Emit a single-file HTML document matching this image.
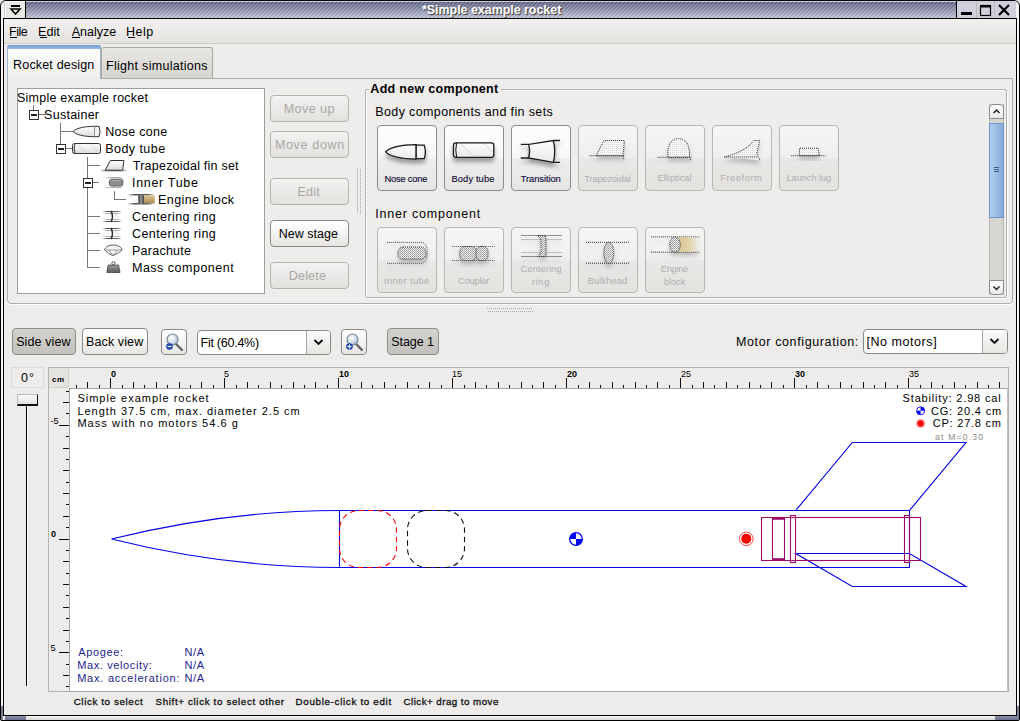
<!DOCTYPE html><html><head><meta charset="utf-8"><style>
html,body{margin:0;padding:0;width:1020px;height:721px;overflow:hidden;background:#edeceb}
body{position:relative;font-family:"Liberation Sans", sans-serif}
div{position:absolute;box-sizing:border-box}
.t{position:absolute;white-space:nowrap;line-height:1}
svg{overflow:visible}
</style></head><body>
<div style="left:0;top:0;width:1020px;height:721px;border:1px solid #000;border-radius:6px 6px 2px 2px;background:#f4f3f2"></div>
<div style="left:3px;top:18px;width:1014px;height:698px;background:#edeceb;border:1px solid #000"></div>
<div style="left:995px;top:716px;width:23px;height:4px;background:linear-gradient(#8b8fa8,#6b6f8a)"></div>
<div style="left:1017px;top:706px;width:2px;height:14px;background:linear-gradient(90deg,#8b8fa8,#6b6f8a)"></div>
<div style="left:1px;top:706px;width:2px;height:14px;background:linear-gradient(90deg,#6b6f8a,#8b8fa8)"></div>
<div style="left:4px;top:716px;width:991px;height:4px;background:linear-gradient(#f3f2f1,#d9d7d3)"></div>
<div style="left:5px;top:716px;width:21px;height:4px;background:linear-gradient(#8b8fa8,#6b6f8a)"></div>
<div style="left:4px;top:1px;width:1012px;height:17px;background:#d0d0dc"></div>
<div style="left:5px;top:1px;width:20px;height:17px;background:#e9e8e5;border-left:1px solid #fff;border-top:1px solid #fff"></div>
<div style="left:26px;top:2px;width:930px;height:16px;background:repeating-linear-gradient(135deg,rgba(225,228,240,.28) 0 0.8px,rgba(0,0,0,0) 0.8px 1.5px,rgba(40,44,70,.15) 1.5px 2.2px,rgba(0,0,0,0) 2.2px 2.83px),linear-gradient(#626686,#c4c7d8)"></div>
<div style="left:25px;top:1px;width:1px;height:17px;background:#000"></div>
<div style="left:956px;top:1px;width:1px;height:17px;background:#000"></div>
<div style="left:4px;top:18px;width:1012px;height:1px;background:#000"></div>
<svg style="position:absolute;left:5px;top:1px" width="20" height="17"><rect x="6" y="4" width="9" height="2" fill="#000"/><path d="M6 8 L15 8 L10.5 13 Z" fill="none" stroke="#000" stroke-width="1.6"/></svg>
<svg style="position:absolute;left:957px;top:1px" width="58" height="17"><rect x="19" y="0" width="1" height="17" fill="#bdbab5"/><rect x="37" y="0" width="1" height="17" fill="#bdbab5"/><rect x="4" y="11" width="11" height="3" fill="#000"/><rect x="23.5" y="4.5" width="10" height="10" fill="none" stroke="#000" stroke-width="1.2"/><rect x="23" y="4" width="11" height="2.5" fill="#000"/><path d="M42 4 L52 14 M52 4 L42 14" stroke="#000" stroke-width="2.2"/></svg>
<span id="title" class="t" style="left:422.00px;top:4.42px;font-size:12.5px;color:#fff;font-weight:bold;letter-spacing:-0.048px;text-shadow:1px 1px 1px #333;">*Simple example rocket</span>
<div style="left:4px;top:19px;width:1012px;height:24px;background:linear-gradient(#f2f1f0,#e4e3e0)"></div>
<div style="left:4px;top:43px;width:1012px;height:1px;background:#cfcdc9"></div>
<span id="m1" class="t" style="left:9.00px;top:25.72px;font-size:12.5px;color:#000;font-weight:normal;letter-spacing:-0.500px;">File</span>
<div style="left:10px;top:37px;width:7px;height:1px;background:#000"></div>
<span id="m2" class="t" style="left:38.00px;top:25.72px;font-size:12.5px;color:#000;font-weight:normal;letter-spacing:0.100px;">Edit</span>
<div style="left:40px;top:37px;width:7px;height:1px;background:#000"></div>
<span id="m3" class="t" style="left:71.70px;top:25.72px;font-size:12.5px;color:#000;font-weight:normal;letter-spacing:0.000px;">Analyze</span>
<div style="left:72px;top:37px;width:8px;height:1px;background:#000"></div>
<span id="m4" class="t" style="left:126.00px;top:25.72px;font-size:12.5px;color:#000;font-weight:normal;letter-spacing:0.500px;">Help</span>
<div style="left:128px;top:37px;width:7px;height:1px;background:#000"></div>
<div style="left:7px;top:78px;width:1006px;height:226px;background:#eeedeb;border:1px solid #aeaca8;border-radius:0 0 4px 4px;box-shadow:0 1px 0 #fff"></div>
<div style="left:101px;top:47px;width:112px;height:32px;background:linear-gradient(#e8e7e4,#d5d4d0);border:1px solid #a9a7a3;border-bottom:none;border-radius:3px 3px 0 0"></div>
<div style="left:7px;top:45px;width:94px;height:34px;background:linear-gradient(#fdfdfc,#efeeec);border:1px solid #9fb3cf;border-bottom:none;border-radius:3px 3px 0 0"></div>
<div style="left:7px;top:45px;width:94px;height:4px;background:linear-gradient(#6d98d2,#9bbce6);border-radius:3px 3px 0 0"></div>
<div style="left:101px;top:78px;width:911px;height:1px;background:#aeaca8"></div>
<span id="tab1" class="t" style="left:13.10px;top:59.22px;font-size:12.5px;color:#000;font-weight:normal;letter-spacing:0.167px;">Rocket design</span>
<span id="tab2" class="t" style="left:106.00px;top:59.92px;font-size:12.5px;color:#000;font-weight:normal;letter-spacing:0.294px;">Flight simulations</span>
<div style="left:17px;top:88px;width:248px;height:206px;background:#fff;border:1px solid #a09e9a"></div>
<div style="left:33px;top:105px;width:1px;height:6px;background:#777"></div>
<div style="left:39px;top:114px;width:7px;height:1px;background:#777"></div>
<div style="left:60px;top:123px;width:1px;height:26px;background:#777"></div>
<div style="left:60px;top:131px;width:13px;height:1px;background:#777"></div>
<div style="left:66px;top:148px;width:7px;height:1px;background:#777"></div>
<div style="left:87px;top:157px;width:1px;height:111px;background:#777"></div>
<div style="left:87px;top:165px;width:13px;height:1px;background:#777"></div>
<div style="left:93px;top:182px;width:6px;height:1px;background:#777"></div>
<div style="left:87px;top:216px;width:13px;height:1px;background:#777"></div>
<div style="left:87px;top:233px;width:13px;height:1px;background:#777"></div>
<div style="left:87px;top:250px;width:13px;height:1px;background:#777"></div>
<div style="left:87px;top:267px;width:13px;height:1px;background:#777"></div>
<div style="left:114px;top:191px;width:1px;height:9px;background:#777"></div>
<div style="left:114px;top:199px;width:12px;height:1px;background:#777"></div>
<div style="left:29px;top:110px;width:10px;height:10px;background:#fff;border:1px solid #333"></div>
<div style="left:31px;top:114px;width:6px;height:2px;background:#222"></div>
<div style="left:56px;top:144px;width:10px;height:10px;background:#fff;border:1px solid #333"></div>
<div style="left:58px;top:148px;width:6px;height:2px;background:#222"></div>
<div style="left:83px;top:178px;width:10px;height:10px;background:#fff;border:1px solid #333"></div>
<div style="left:85px;top:182px;width:6px;height:2px;background:#222"></div>
<span id="r0" class="t" style="left:17.00px;top:91.92px;font-size:12.5px;color:#000;font-weight:normal;letter-spacing:0.225px;">Simple example rocket</span>
<span id="r1" class="t" style="left:44.10px;top:109.12px;font-size:12.5px;color:#000;font-weight:normal;letter-spacing:0.263px;">Sustainer</span>
<span id="r2" class="t" style="left:105.30px;top:126.42px;font-size:12.5px;color:#000;font-weight:normal;letter-spacing:0.275px;">Nose cone</span>
<span id="r3" class="t" style="left:105.30px;top:143.42px;font-size:12.5px;color:#000;font-weight:normal;letter-spacing:0.438px;">Body tube</span>
<span id="r4" class="t" style="left:132.80px;top:160.42px;font-size:12.5px;color:#000;font-weight:normal;letter-spacing:0.228px;">Trapezoidal fin set</span>
<span id="r5" class="t" style="left:132.00px;top:177.42px;font-size:12.5px;color:#000;font-weight:normal;letter-spacing:0.689px;">Inner Tube</span>
<span id="r6" class="t" style="left:158.10px;top:194.42px;font-size:12.5px;color:#000;font-weight:normal;letter-spacing:0.400px;">Engine block</span>
<span id="r7" class="t" style="left:132.00px;top:211.42px;font-size:12.5px;color:#000;font-weight:normal;letter-spacing:0.408px;">Centering ring</span>
<span id="r8" class="t" style="left:132.00px;top:228.42px;font-size:12.5px;color:#000;font-weight:normal;letter-spacing:0.408px;">Centering ring</span>
<span id="r9" class="t" style="left:132.00px;top:245.42px;font-size:12.5px;color:#000;font-weight:normal;letter-spacing:0.250px;">Parachute</span>
<span id="r10" class="t" style="left:132.00px;top:262.42px;font-size:12.5px;color:#000;font-weight:normal;letter-spacing:0.500px;">Mass component</span>
<svg style="position:absolute;left:0;top:0" width="270" height="290">
<defs><linearGradient id="gshade" x1="0" y1="0" x2="0" y2="1"><stop offset="0" stop-color="#fdfdfd"/><stop offset="1" stop-color="#dedede"/></linearGradient>
<linearGradient id="gmetal" x1="0" y1="0" x2="0" y2="1"><stop offset="0" stop-color="#b5b5b5"/><stop offset=".5" stop-color="#8a8a8a"/><stop offset="1" stop-color="#9a9a9a"/></linearGradient>
<linearGradient id="gring" x1="0" y1="0" x2="1" y2="0"><stop offset="0" stop-color="#333"/><stop offset=".5" stop-color="#999"/><stop offset="1" stop-color="#333"/></linearGradient>
<linearGradient id="gfade" x1="0" y1="0" x2="1" y2="0"><stop offset="0" stop-color="#555" stop-opacity="0"/><stop offset=".25" stop-color="#555"/><stop offset=".75" stop-color="#555"/><stop offset="1" stop-color="#555" stop-opacity="0"/></linearGradient>
<linearGradient id="gfadel" x1="0" y1="0" x2="1" y2="0"><stop offset="0" stop-color="#999" stop-opacity="0"/><stop offset=".4" stop-color="#999"/><stop offset="1" stop-color="#888"/></linearGradient>
<linearGradient id="gbrass" x1="0" y1="0" x2="0" y2="1"><stop offset="0" stop-color="#d9c79a"/><stop offset=".5" stop-color="#c2a86e"/><stop offset="1" stop-color="#a88f58"/></linearGradient>
<linearGradient id="gmass" x1="0" y1="0" x2="0" y2="1"><stop offset="0" stop-color="#9a9a9a"/><stop offset="1" stop-color="#5a5a5a"/></linearGradient></defs>
<path d="M73 131.5 C75.5 128.5 83 126.4 94.5 126.3 L94.5 136.7 C83 136.6 75.5 134.5 73 131.5 Z" fill="url(#gshade)" stroke="#333" stroke-width="1"/>
<path d="M94.5 126.3 L99 126.3 Q101.3 131.5 99 136.7 L94.5 136.7" fill="#f2f2f2" stroke="#333" stroke-width="1"/>
<rect x="72.5" y="143.5" width="28" height="10" rx="2" fill="url(#gshade)" stroke="#333" stroke-width="1"/>
<path d="M75 143.5 Q73.5 148.5 75 153.5" fill="none" stroke="#333" stroke-width="1"/>
<path d="M78 144.5 L86 152.5 M91 144.5 L99 152.5" stroke="#ccc" stroke-width=".7"/>
<path d="M105.3 170 L110.3 160.5 L123.9 160.5 L122.7 170" fill="url(#gshade)" stroke="#333" stroke-width="1"/>
<rect x="100" y="169.6" width="27.5" height="1.7" fill="url(#gfade)"/>
<path d="M103 177.7 H120 Q123 177.7 123 182.5 Q123 187.3 120 187.3 H103" fill="none" stroke="url(#gfadel)" stroke-width="1"/>
<rect x="109.3" y="179.3" width="13" height="6.6" rx="2.5" fill="url(#gmetal)" stroke="#555" stroke-width=".9"/>
<path d="M127.3 194.7 H154.7 M127.3 203.8 H154.7" stroke="url(#gfade)" stroke-width="1.5"/>
<rect x="143.7" y="195.3" width="11" height="8" fill="url(#gbrass)"/>
<rect x="138.3" y="194.7" width="5.6" height="9.4" rx="1.5" fill="url(#gring)"/>
<path d="M130 196 L136 202" stroke="#ddd" stroke-width=".7"/>
<g><path d="M102 211.5 H122 M102 221.5 H122" stroke="url(#gfade)" stroke-width="1.2"/><path d="M102 213.5 H122 M102 219.5 H122" stroke="url(#gfade)" stroke-width=".8" opacity=".6"/>
<path d="M111 211 Q114 216.5 111 222" fill="none" stroke="#333" stroke-width="1.6"/><path d="M115 213.5 L119 218" stroke="#bbb" stroke-width=".6"/></g>
<g transform="translate(0,17)"><path d="M102 211.5 H122 M102 221.5 H122" stroke="url(#gfade)" stroke-width="1.2"/><path d="M102 213.5 H122 M102 219.5 H122" stroke="url(#gfade)" stroke-width=".8" opacity=".6"/>
<path d="M111 211 Q114 216.5 111 222" fill="none" stroke="#333" stroke-width="1.6"/><path d="M115 213.5 L119 218" stroke="#bbb" stroke-width=".6"/></g>
<path d="M104.5 250 Q106 245 113.3 245 Q120.6 245 122.2 250 Q118 254 113 255.5 Q108 254 104.5 250 Z" fill="#f2f2f2" stroke="#666" stroke-width="1"/>
<path d="M104.5 250 H122.2 M108.5 250 L113 255.5 L117.5 250" fill="none" stroke="#888" stroke-width=".8"/>
<path d="M106.8 272.5 L108.2 265 L118.6 265 L120 272.5 Z" fill="url(#gmass)" stroke="#444" stroke-width=".8"/>
<circle cx="113.4" cy="263.2" r="1.6" fill="none" stroke="#555" stroke-width="1"/>
</svg>
<div style="left:270px;top:95px;width:79px;height:27px;background:linear-gradient(#f3f3f2 0%,#ebeae8 45%,#e3e2df 100%);border:1px solid #b5b3ae;border-radius:4px"></div>
<span id="b1" class="t" style="left:283.70px;top:103.32px;font-size:12.5px;color:#a9a8a5;font-weight:normal;letter-spacing:0.450px;">Move up</span>
<div style="left:270px;top:131px;width:79px;height:27px;background:linear-gradient(#f3f3f2 0%,#ebeae8 45%,#e3e2df 100%);border:1px solid #b5b3ae;border-radius:4px"></div>
<span id="b2" class="t" style="left:274.90px;top:139.32px;font-size:12.5px;color:#a9a8a5;font-weight:normal;letter-spacing:0.675px;">Move down</span>
<div style="left:270px;top:178px;width:79px;height:27px;background:linear-gradient(#f3f3f2 0%,#ebeae8 45%,#e3e2df 100%);border:1px solid #b5b3ae;border-radius:4px"></div>
<span id="b3" class="t" style="left:297.40px;top:186.42px;font-size:12.5px;color:#a9a8a5;font-weight:normal;letter-spacing:0.233px;">Edit</span>
<div style="left:270px;top:220px;width:79px;height:27px;background:linear-gradient(#ffffff 0%,#f5f5f4 45%,#e6e5e2 100%);border:1px solid #8a8884;border-radius:4px"></div>
<span id="b4" class="t" style="left:278.70px;top:228.02px;font-size:12.5px;color:#000;font-weight:normal;letter-spacing:0.013px;">New stage</span>
<div style="left:270px;top:262px;width:79px;height:27px;background:linear-gradient(#f3f3f2 0%,#ebeae8 45%,#e3e2df 100%);border:1px solid #b5b3ae;border-radius:4px"></div>
<span id="b5" class="t" style="left:288.80px;top:269.92px;font-size:12.5px;color:#a9a8a5;font-weight:normal;letter-spacing:0.180px;">Delete</span>
<div style="left:357px;top:168px;width:5px;height:46px;background:linear-gradient(#a8a6a2 50%,transparent 50%) 0 0/1px 2px repeat-y,linear-gradient(#a8a6a2 50%,transparent 50%) 3px 1px/1px 2px repeat-y"></div>
<div style="left:487px;top:308px;width:46px;height:4px;background:linear-gradient(90deg,#a8a6a2 50%,transparent 50%) 0 0/2px 1px repeat-x,linear-gradient(90deg,#a8a6a2 50%,transparent 50%) 1px 3px/2px 1px repeat-x"></div>
<div style="left:365px;top:89px;width:642px;height:209px;border:1px solid #b3b1ad;border-radius:2px;box-shadow:1px 1px 0 #fff, inset 1px 1px 0 #fafafa"></div>
<div style="left:369px;top:82px;width:132px;height:15px;background:#eeedeb"></div>
<span id="h0" class="t" style="left:370.30px;top:82.92px;font-size:12.5px;color:#000;font-weight:bold;letter-spacing:0.312px;">Add new component</span>
<span id="h1" class="t" style="left:375.30px;top:106.22px;font-size:12.5px;color:#000;font-weight:normal;letter-spacing:0.370px;">Body components and fin sets</span>
<span id="h2" class="t" style="left:375.30px;top:208.02px;font-size:12.5px;color:#000;font-weight:normal;letter-spacing:0.786px;">Inner component</span>
<div style="left:377px;top:125px;width:60px;height:66px;background:linear-gradient(#fdfdfd 0%,#f7f7f6 50%,#eeeeed 51%,#e6e5e3 100%);border:1px solid #8f8d89;border-radius:4px"></div>
<div style="left:444px;top:125px;width:60px;height:66px;background:linear-gradient(#fdfdfd 0%,#f7f7f6 50%,#eeeeed 51%,#e6e5e3 100%);border:1px solid #8f8d89;border-radius:4px"></div>
<div style="left:511px;top:125px;width:60px;height:66px;background:linear-gradient(#fdfdfd 0%,#f7f7f6 50%,#eeeeed 51%,#e6e5e3 100%);border:1px solid #8f8d89;border-radius:4px"></div>
<div style="left:578px;top:125px;width:60px;height:66px;background:linear-gradient(#f5f5f4 0%,#efefee 50%,#e9e8e6 51%,#e3e2df 100%);border:1px solid #b9b7b3;border-radius:4px"></div>
<div style="left:645px;top:125px;width:60px;height:66px;background:linear-gradient(#f5f5f4 0%,#efefee 50%,#e9e8e6 51%,#e3e2df 100%);border:1px solid #b9b7b3;border-radius:4px"></div>
<div style="left:712px;top:125px;width:60px;height:66px;background:linear-gradient(#f5f5f4 0%,#efefee 50%,#e9e8e6 51%,#e3e2df 100%);border:1px solid #b9b7b3;border-radius:4px"></div>
<div style="left:779px;top:125px;width:60px;height:66px;background:linear-gradient(#f5f5f4 0%,#efefee 50%,#e9e8e6 51%,#e3e2df 100%);border:1px solid #b9b7b3;border-radius:4px"></div>
<div style="left:377px;top:227px;width:60px;height:66px;background:linear-gradient(#f5f5f4 0%,#efefee 50%,#e9e8e6 51%,#e3e2df 100%);border:1px solid #b9b7b3;border-radius:4px"></div>
<div style="left:444px;top:227px;width:60px;height:66px;background:linear-gradient(#f5f5f4 0%,#efefee 50%,#e9e8e6 51%,#e3e2df 100%);border:1px solid #b9b7b3;border-radius:4px"></div>
<div style="left:511px;top:227px;width:60px;height:66px;background:linear-gradient(#f5f5f4 0%,#efefee 50%,#e9e8e6 51%,#e3e2df 100%);border:1px solid #b9b7b3;border-radius:4px"></div>
<div style="left:578px;top:227px;width:60px;height:66px;background:linear-gradient(#f5f5f4 0%,#efefee 50%,#e9e8e6 51%,#e3e2df 100%);border:1px solid #b9b7b3;border-radius:4px"></div>
<div style="left:645px;top:227px;width:60px;height:66px;background:linear-gradient(#f5f5f4 0%,#efefee 50%,#e9e8e6 51%,#e3e2df 100%);border:1px solid #b9b7b3;border-radius:4px"></div>
<span id="c0" class="t" style="left:384.50px;top:174.83px;font-size:9.3px;color:#10103a;font-weight:normal;letter-spacing:-0.188px;-webkit-text-stroke:0.15px #10103a;">Nose cone</span>
<span id="c1" class="t" style="left:451.50px;top:174.83px;font-size:9.3px;color:#10103a;font-weight:normal;letter-spacing:0.125px;-webkit-text-stroke:0.15px #10103a;">Body tube</span>
<span id="c2" class="t" style="left:520.80px;top:174.93px;font-size:9.3px;color:#10103a;font-weight:normal;letter-spacing:-0.067px;-webkit-text-stroke:0.15px #10103a;">Transition</span>
<span id="c3" class="t" style="left:584.30px;top:174.63px;font-size:9.3px;color:#aeadb0;font-weight:normal;letter-spacing:-0.170px;">Trapezoidal</span>
<span id="c4" class="t" style="left:657.60px;top:174.43px;font-size:9.3px;color:#aeadb0;font-weight:normal;letter-spacing:-0.022px;">Elliptical</span>
<span id="c5" class="t" style="left:720.20px;top:174.43px;font-size:9.3px;color:#aeadb0;font-weight:normal;letter-spacing:0.557px;">Freeform</span>
<span id="c6" class="t" style="left:786.50px;top:174.43px;font-size:9.3px;color:#aeadb0;font-weight:normal;letter-spacing:-0.078px;">Launch lug</span>
<span id="d0" class="t" style="left:384.10px;top:277.13px;font-size:9.3px;color:#aeadb0;font-weight:normal;letter-spacing:0.356px;">Inner tube</span>
<span id="d1" class="t" style="left:457.90px;top:277.13px;font-size:9.3px;color:#aeadb0;font-weight:normal;letter-spacing:-0.167px;">Coupler</span>
<span id="d2" class="t" style="left:520.60px;top:265.03px;font-size:9.3px;color:#aeadb0;font-weight:normal;letter-spacing:0.075px;">Centering</span>
<span id="d2b" class="t" style="left:532.00px;top:277.73px;font-size:9.3px;color:#aeadb0;font-weight:normal;letter-spacing:0.600px;">ring</span>
<span id="d3" class="t" style="left:587.70px;top:277.13px;font-size:9.3px;color:#aeadb0;font-weight:normal;letter-spacing:0.114px;">Bulkhead</span>
<span id="d4" class="t" style="left:660.80px;top:265.13px;font-size:9.3px;color:#aeadb0;font-weight:normal;letter-spacing:-0.300px;">Engine</span>
<span id="d4b" class="t" style="left:664.00px;top:277.53px;font-size:9.3px;color:#aeadb0;font-weight:normal;letter-spacing:-0.100px;">block</span>
<svg style="position:absolute;left:360px;top:120px" width="490" height="180">
<defs>
<linearGradient id="ci" x1="0" y1="0" x2="0" y2="1"><stop offset="0" stop-color="#ffffff"/><stop offset="1" stop-color="#e8e8e8"/></linearGradient>
<filter id="ds" x="-30%" y="-50%" width="160%" height="220%"><feDropShadow dx="0" dy="4" stdDeviation="2" flood-color="#000" flood-opacity="0.35"/></filter>
<filter id="dsl" x="-30%" y="-50%" width="160%" height="220%"><feDropShadow dx="0" dy="4" stdDeviation="2" flood-color="#000" flood-opacity="0.2"/></filter>
<pattern id="dotsl" width="2" height="2" patternUnits="userSpaceOnUse"><rect width="2" height="2" fill="#ececec"/><rect width="1" height="1" fill="#9a9a9a"/><rect x="1" y="1" width="1" height="1" fill="#b0b0b0"/></pattern>
<linearGradient id="tanf" x1="0" y1="0" x2="1" y2="0"><stop offset="0" stop-color="#d9c493"/><stop offset=".6" stop-color="#e6d7b0"/><stop offset="1" stop-color="#f0ebe0" stop-opacity=".3"/></linearGradient>
<pattern id="dotsw" width="2" height="2" patternUnits="userSpaceOnUse"><rect width="2" height="2" fill="#f7f7f7"/><rect width="1" height="1" fill="#d8d8d8"/></pattern>
</defs>
<g stroke="#1a1a1a" stroke-width="1.3" filter="url(#ds)">
<path d="M25.6 31.9 C30 27.5 42 24.9 56.2 24.7 L56.2 39.1 C42 38.9 30 36.3 25.6 31.9 Z" fill="url(#ci)"/>
<path d="M56.2 25.2 L64.2 25.2 Q66.6 31.9 64.2 38.7 L56.2 38.7 Z" fill="#f4f4f4"/>
</g>
<g stroke="#1a1a1a" stroke-width="1.3" filter="url(#ds)">
<rect x="93.5" y="22.8" width="40.3" height="14.5" rx="2.5" fill="url(#ci)"/>
<path d="M96.6 23 Q95 30 96.6 37" fill="none" stroke-width="1.1"/>
</g>
<path d="M101 24 L113.6 36.5 M124.5 24 L133 32.5" stroke="#c8c8c8" stroke-width=".8"/>
<g stroke="#1a1a1a" stroke-width="1.3" filter="url(#ds)">
<path d="M168.5 24.4 Q170.8 31.2 168.5 38 L193.3 42.3 Q196.2 31.4 193.3 20.5 Z" fill="url(#ci)"/>
<path d="M160.8 24.4 H168.5 M160.8 38 H168.5 M193.3 20.5 H200 M193.3 42.3 H200" fill="none"/>
</g>
<g stroke="#2a2a2a" stroke-width="1" stroke-dasharray="1 1" filter="url(#dsl)">
<path d="M236.3 35.7 L243.8 20.6 L264.4 20.6 L263 35.7 Z" fill="url(#dotsw)"/>
<path d="M229.4 35.7 H264 M263 35.7 L264 40" fill="none"/>
</g>
<g stroke="#2a2a2a" stroke-width="1" stroke-dasharray="1 1" filter="url(#dsl)">
<path d="M308.3 37.3 C306.5 26 311 18.6 318.5 18.6 C326 18.6 330.5 26 329.4 37.3 Z" fill="url(#dotsw)"/>
<path d="M297.4 37.3 H331.8 M329.4 37.3 L331.5 41" fill="none"/>
</g>
<g stroke="#2a2a2a" stroke-width="1" stroke-dasharray="1 1" filter="url(#dsl)">
<path d="M364.3 37 C376 34 386 30 394 20.5 L399.7 20.5 L396.7 34 L399.7 40 M396.7 37 H364.3" fill="url(#dotsw)"/>
</g>
<g stroke="#2a2a2a" stroke-width="1" stroke-dasharray="1 1" filter="url(#dsl)">
<path d="M439.5 35.7 V28.2 H458 L459.5 35.7 Z" fill="url(#dotsw)"/>
<path d="M431.3 35.7 H465.7" fill="none"/>
</g>
<g transform="translate(0,102)">
<g stroke="#2a2a2a" stroke-width="1" stroke-dasharray="1 1" filter="url(#dsl)">
<path d="M27.2 20.4 H62 Q67.3 21.5 67.3 30.8 Q67.3 40.2 62 41.3 H27.2" fill="none" stroke="#444"/>
<rect x="38" y="25" width="28" height="12.2" rx="5" fill="url(#dotsl)"/>
</g>
<g stroke="#2a2a2a" stroke-width="1" stroke-dasharray="1 1" filter="url(#dsl)">
<path d="M92.2 24.5 H134.9 M92.2 38.5 H134.9" fill="none" stroke="#555"/>
<rect x="99.8" y="24.5" width="16.6" height="14" rx="5" fill="url(#dotsl)"/>
<rect x="116" y="24.5" width="12" height="14" rx="5" fill="url(#dotsl)"/>
</g>
<g stroke="#2a2a2a" stroke-width="1" stroke-dasharray="1 1" filter="url(#dsl)">
<path d="M161.5 13.5 H202 M161.5 34.5 H202" fill="none"/>
<path d="M161.5 17.5 H202 M161.5 30.5 H202" fill="none" stroke="#888"/>
<path d="M177.7 13.4 H185.3 L186 17.7 V30.4 L185.3 34.5 H177.7 L181 30.4 V17.7 Z" fill="url(#dotsl)"/>
</g>
<g stroke="#2a2a2a" stroke-width="1" stroke-dasharray="1 1" filter="url(#dsl)">
<path d="M226 20.3 H268.9 M226 41.2 H268.9" fill="none"/>
<ellipse cx="248.8" cy="30.7" rx="5" ry="10.5" fill="url(#dotsl)"/>
</g>
<g stroke="#2a2a2a" stroke-width="1" stroke-dasharray="1 1" filter="url(#dsl)">
<path d="M290.8 14.9 H339.3 M290.8 30.2 H339.3" fill="none"/>
<rect x="319" y="15.4" width="20" height="14.4" fill="url(#tanf)" stroke="none"/>
<ellipse cx="315" cy="22.5" rx="5.3" ry="7.6" fill="url(#dotsl)"/>
</g>
</g>
</svg>
<div style="left:989px;top:104px;width:15px;height:191px;background:#d6d5d2;border-left:1px solid #b8b6b2;border-right:1px solid #b8b6b2"></div>
<div style="left:989px;top:104px;width:15px;height:15px;background:linear-gradient(#ffffff,#e9e8e6);border:1px solid #8d8b87;border-radius:4px 4px 0 0"></div>
<div style="left:989px;top:123px;width:15px;height:95px;background:linear-gradient(90deg,#b3cdee,#86acdd);border:1px solid #6f96c8"></div>
<div style="left:989px;top:280px;width:15px;height:15px;background:linear-gradient(#ffffff,#e9e8e6);border:1px solid #8d8b87;border-radius:0 0 4px 4px"></div>
<svg style="position:absolute;left:989px;top:104px" width="15" height="191"><path d="M4.5 9 L7.5 6 L10.5 9" fill="none" stroke="#222" stroke-width="1.5"/><path d="M4.5 182.5 L7.5 185.5 L10.5 182.5" fill="none" stroke="#222" stroke-width="1.5"/><path d="M5 63.5 H10 M5 65.5 H10 M5 67.5 H10" stroke="#3e5f8c" stroke-width="1"/></svg>
<div style="left:12px;top:328px;width:64px;height:27px;background:linear-gradient(#d3d2ce,#c3c1bd);border:1px solid #8f8d89;border-radius:4px"></div>
<span id="t1" class="t" style="left:16.20px;top:336.12px;font-size:12.5px;color:#000;font-weight:normal;letter-spacing:0.100px;">Side view</span>
<div style="left:82px;top:328px;width:66px;height:27px;background:linear-gradient(#ffffff 0%,#f5f5f4 45%,#e6e5e2 100%);border:1px solid #8a8884;border-radius:4px"></div>
<span id="t2" class="t" style="left:86.00px;top:336.12px;font-size:12.5px;color:#000;font-weight:normal;letter-spacing:0.112px;">Back view</span>
<div style="left:161px;top:329px;width:26px;height:26px;background:linear-gradient(#ffffff 0%,#f5f5f4 45%,#e6e5e2 100%);border:1px solid #8a8884;border-radius:4px"></div>
<div style="left:341px;top:329px;width:26px;height:26px;background:linear-gradient(#ffffff 0%,#f5f5f4 45%,#e6e5e2 100%);border:1px solid #8a8884;border-radius:4px"></div>
<svg style="position:absolute;left:162px;top:330px" width="24" height="24">
<defs><radialGradient id="lens162" cx=".4" cy=".35" r=".7"><stop offset="0" stop-color="#fff"/><stop offset=".7" stop-color="#c9d6e6"/><stop offset="1" stop-color="#8ea4c0"/></radialGradient></defs>
<path d="M14 14 L20 20" stroke="#666" stroke-width="2.4" stroke-linecap="round"/>
<circle cx="10.5" cy="9.5" r="5.5" fill="url(#lens162)" stroke="#7a8797" stroke-width="1.2"/>
<g transform="translate(7.5,16.5)"><circle r="3.3" fill="#1f45a8"/><path d="M-2 0 H2" stroke="#fff" stroke-width="1.2"/></g></svg>
<svg style="position:absolute;left:342px;top:330px" width="24" height="24">
<defs><radialGradient id="lens342" cx=".4" cy=".35" r=".7"><stop offset="0" stop-color="#fff"/><stop offset=".7" stop-color="#c9d6e6"/><stop offset="1" stop-color="#8ea4c0"/></radialGradient></defs>
<path d="M14 14 L20 20" stroke="#666" stroke-width="2.4" stroke-linecap="round"/>
<circle cx="10.5" cy="9.5" r="5.5" fill="url(#lens342)" stroke="#7a8797" stroke-width="1.2"/>
<g transform="translate(7.5,16.5)"><circle r="3.3" fill="#1f45a8"/><path d="M-2 0 H2" stroke="#fff" stroke-width="1.2"/><path d="M0 -2 V2" stroke="#fff" stroke-width="1.2"/></g></svg>
<div style="left:197px;top:330px;width:134px;height:25px;background:#fff;border:1px solid #8a8884;border-radius:4px"></div>
<div style="left:306px;top:331px;width:24px;height:23px;background:linear-gradient(#fbfbfa,#e6e5e2);border-left:1px solid #a9a7a3;border-radius:0 3px 3px 0"></div>
<svg style="position:absolute;left:312px;top:336px" width="14" height="12"><path d="M2.5 4 L6.5 8 L10.5 4" fill="none" stroke="#111" stroke-width="1.9"/></svg>
<span id="t3" class="t" style="left:200.50px;top:337.12px;font-size:12.5px;color:#000;font-weight:normal;letter-spacing:-0.250px;">Fit (60.4%)</span>
<div style="left:387px;top:328px;width:52px;height:27px;background:linear-gradient(#d3d2ce,#c3c1bd);border:1px solid #8f8d89;border-radius:4px"></div>
<span id="t4" class="t" style="left:391.30px;top:336.42px;font-size:12.5px;color:#000;font-weight:normal;letter-spacing:-0.083px;">Stage 1</span>
<span id="t5" class="t" style="left:736.00px;top:336.12px;font-size:12.5px;color:#000;font-weight:normal;letter-spacing:0.621px;">Motor configuration:</span>
<div style="left:863px;top:329px;width:145px;height:25px;background:#fff;border:1px solid #8a8884;border-radius:4px"></div>
<div style="left:982px;top:330px;width:25px;height:23px;background:linear-gradient(#fbfbfa,#e6e5e2);border-left:1px solid #a9a7a3;border-radius:0 3px 3px 0"></div>
<svg style="position:absolute;left:988px;top:335px" width="14" height="12"><path d="M2.5 4 L6.5 8 L10.5 4" fill="none" stroke="#111" stroke-width="1.9"/></svg>
<span id="t6" class="t" style="left:866.50px;top:336.42px;font-size:12.5px;color:#000;font-weight:normal;letter-spacing:0.550px;">[No motors]</span>
<div style="left:11px;top:367px;width:33px;height:21px;border:1px solid #dcdad6;background:#edeceb"></div>
<span id="a0" class="t" style="left:21.00px;top:371.92px;font-size:12.5px;color:#000;font-weight:normal;letter-spacing:1.000px;">0°</span>
<div style="left:26px;top:405px;width:1px;height:281px;background:#000"></div>
<div style="left:27px;top:406px;width:1px;height:280px;background:#fff"></div>
<div style="left:17px;top:394px;width:21px;height:12px;background:linear-gradient(#fafaf9,#e3e2df);border:1px solid #bcbab6;border-right:1.5px solid #111;border-bottom:2px solid #111"></div>
<div style="left:48px;top:367px;width:961px;height:325px;background:#edeceb;border:1px solid #b4b2ae"></div>
<div style="left:49px;top:368px;width:20px;height:20px;background:#e4e3e0;border-right:1px solid #d0ceca;border-bottom:1px solid #d0ceca"></div>
<span id="cm" class="t" style="left:52.00px;top:376.23px;font-size:8px;color:#000;font-weight:bold;letter-spacing:0.500px;">cm</span>
<div style="left:69px;top:388px;width:939px;height:304px;background:#fff;border-left:1px solid #a7a5a1;border-top:1px solid #a7a5a1;border-bottom:1px solid #a7a5a1;border-right:1px solid #c4c2be"></div>
<svg style="position:absolute;left:0;top:0" width="1020" height="721"><path d="M76.5 385 V388" stroke="#111" stroke-width="1"/><path d="M87.5 382 V388" stroke="#111" stroke-width="1"/><path d="M99.5 385 V388" stroke="#111" stroke-width="1"/><path d="M110.5 378 V388" stroke="#111" stroke-width="1"/><path d="M122.5 385 V388" stroke="#111" stroke-width="1"/><path d="M133.5 382 V388" stroke="#111" stroke-width="1"/><path d="M144.5 385 V388" stroke="#111" stroke-width="1"/><path d="M156.5 382 V388" stroke="#111" stroke-width="1"/><path d="M167.5 385 V388" stroke="#111" stroke-width="1"/><path d="M179.5 382 V388" stroke="#111" stroke-width="1"/><path d="M190.5 385 V388" stroke="#111" stroke-width="1"/><path d="M201.5 382 V388" stroke="#111" stroke-width="1"/><path d="M213.5 385 V388" stroke="#111" stroke-width="1"/><path d="M224.5 378 V388" stroke="#111" stroke-width="1"/><path d="M236.5 385 V388" stroke="#111" stroke-width="1"/><path d="M247.5 382 V388" stroke="#111" stroke-width="1"/><path d="M258.5 385 V388" stroke="#111" stroke-width="1"/><path d="M270.5 382 V388" stroke="#111" stroke-width="1"/><path d="M281.5 385 V388" stroke="#111" stroke-width="1"/><path d="M293.5 382 V388" stroke="#111" stroke-width="1"/><path d="M304.5 385 V388" stroke="#111" stroke-width="1"/><path d="M315.5 382 V388" stroke="#111" stroke-width="1"/><path d="M327.5 385 V388" stroke="#111" stroke-width="1"/><path d="M338.5 378 V388" stroke="#111" stroke-width="1"/><path d="M350.5 385 V388" stroke="#111" stroke-width="1"/><path d="M361.5 382 V388" stroke="#111" stroke-width="1"/><path d="M372.5 385 V388" stroke="#111" stroke-width="1"/><path d="M384.5 382 V388" stroke="#111" stroke-width="1"/><path d="M395.5 385 V388" stroke="#111" stroke-width="1"/><path d="M407.5 382 V388" stroke="#111" stroke-width="1"/><path d="M418.5 385 V388" stroke="#111" stroke-width="1"/><path d="M429.5 382 V388" stroke="#111" stroke-width="1"/><path d="M441.5 385 V388" stroke="#111" stroke-width="1"/><path d="M452.5 378 V388" stroke="#111" stroke-width="1"/><path d="M464.5 385 V388" stroke="#111" stroke-width="1"/><path d="M475.5 382 V388" stroke="#111" stroke-width="1"/><path d="M486.5 385 V388" stroke="#111" stroke-width="1"/><path d="M498.5 382 V388" stroke="#111" stroke-width="1"/><path d="M509.5 385 V388" stroke="#111" stroke-width="1"/><path d="M521.5 382 V388" stroke="#111" stroke-width="1"/><path d="M532.5 385 V388" stroke="#111" stroke-width="1"/><path d="M543.5 382 V388" stroke="#111" stroke-width="1"/><path d="M555.5 385 V388" stroke="#111" stroke-width="1"/><path d="M566.5 378 V388" stroke="#111" stroke-width="1"/><path d="M578.5 385 V388" stroke="#111" stroke-width="1"/><path d="M589.5 382 V388" stroke="#111" stroke-width="1"/><path d="M600.5 385 V388" stroke="#111" stroke-width="1"/><path d="M612.5 382 V388" stroke="#111" stroke-width="1"/><path d="M623.5 385 V388" stroke="#111" stroke-width="1"/><path d="M635.5 382 V388" stroke="#111" stroke-width="1"/><path d="M646.5 385 V388" stroke="#111" stroke-width="1"/><path d="M657.5 382 V388" stroke="#111" stroke-width="1"/><path d="M669.5 385 V388" stroke="#111" stroke-width="1"/><path d="M680.5 378 V388" stroke="#111" stroke-width="1"/><path d="M692.5 385 V388" stroke="#111" stroke-width="1"/><path d="M703.5 382 V388" stroke="#111" stroke-width="1"/><path d="M714.5 385 V388" stroke="#111" stroke-width="1"/><path d="M726.5 382 V388" stroke="#111" stroke-width="1"/><path d="M737.5 385 V388" stroke="#111" stroke-width="1"/><path d="M749.5 382 V388" stroke="#111" stroke-width="1"/><path d="M760.5 385 V388" stroke="#111" stroke-width="1"/><path d="M771.5 382 V388" stroke="#111" stroke-width="1"/><path d="M783.5 385 V388" stroke="#111" stroke-width="1"/><path d="M794.5 378 V388" stroke="#111" stroke-width="1"/><path d="M806.5 385 V388" stroke="#111" stroke-width="1"/><path d="M817.5 382 V388" stroke="#111" stroke-width="1"/><path d="M828.5 385 V388" stroke="#111" stroke-width="1"/><path d="M840.5 382 V388" stroke="#111" stroke-width="1"/><path d="M851.5 385 V388" stroke="#111" stroke-width="1"/><path d="M863.5 382 V388" stroke="#111" stroke-width="1"/><path d="M874.5 385 V388" stroke="#111" stroke-width="1"/><path d="M885.5 382 V388" stroke="#111" stroke-width="1"/><path d="M897.5 385 V388" stroke="#111" stroke-width="1"/><path d="M908.5 378 V388" stroke="#111" stroke-width="1"/><path d="M920.5 385 V388" stroke="#111" stroke-width="1"/><path d="M931.5 382 V388" stroke="#111" stroke-width="1"/><path d="M942.5 385 V388" stroke="#111" stroke-width="1"/><path d="M954.5 382 V388" stroke="#111" stroke-width="1"/><path d="M965.5 385 V388" stroke="#111" stroke-width="1"/><path d="M977.5 382 V388" stroke="#111" stroke-width="1"/><path d="M988.5 385 V388" stroke="#111" stroke-width="1"/><path d="M999.5 382 V388" stroke="#111" stroke-width="1"/><path d="M66 391.5 H69" stroke="#111" stroke-width="1"/><path d="M63 402.5 H69" stroke="#111" stroke-width="1"/><path d="M66 413.5 H69" stroke="#111" stroke-width="1"/><path d="M59 425.5 H69" stroke="#111" stroke-width="1"/><path d="M66 436.5 H69" stroke="#111" stroke-width="1"/><path d="M63 448.5 H69" stroke="#111" stroke-width="1"/><path d="M66 459.5 H69" stroke="#111" stroke-width="1"/><path d="M63 470.5 H69" stroke="#111" stroke-width="1"/><path d="M66 482.5 H69" stroke="#111" stroke-width="1"/><path d="M63 493.5 H69" stroke="#111" stroke-width="1"/><path d="M66 504.5 H69" stroke="#111" stroke-width="1"/><path d="M63 516.5 H69" stroke="#111" stroke-width="1"/><path d="M66 527.5 H69" stroke="#111" stroke-width="1"/><path d="M59 539.5 H69" stroke="#111" stroke-width="1"/><path d="M66 550.5 H69" stroke="#111" stroke-width="1"/><path d="M63 561.5 H69" stroke="#111" stroke-width="1"/><path d="M66 573.5 H69" stroke="#111" stroke-width="1"/><path d="M63 584.5 H69" stroke="#111" stroke-width="1"/><path d="M66 595.5 H69" stroke="#111" stroke-width="1"/><path d="M63 607.5 H69" stroke="#111" stroke-width="1"/><path d="M66 618.5 H69" stroke="#111" stroke-width="1"/><path d="M63 630.5 H69" stroke="#111" stroke-width="1"/><path d="M66 641.5 H69" stroke="#111" stroke-width="1"/><path d="M59 652.5 H69" stroke="#111" stroke-width="1"/><path d="M66 664.5 H69" stroke="#111" stroke-width="1"/><path d="M63 675.5 H69" stroke="#111" stroke-width="1"/><path d="M66 686.5 H69" stroke="#111" stroke-width="1"/></svg>
<span id="rx0" class="t" style="left:111.00px;top:369.98px;font-size:9px;color:#000;font-weight:bold;letter-spacing:0.000px;">0</span>
<span id="rx5" class="t" style="left:224.00px;top:369.98px;font-size:9px;color:#000;font-weight:normal;letter-spacing:0.000px;">5</span>
<span id="rx10" class="t" style="left:339.00px;top:369.98px;font-size:9px;color:#000;font-weight:bold;letter-spacing:0.000px;">10</span>
<span id="rx15" class="t" style="left:452.00px;top:369.98px;font-size:9px;color:#000;font-weight:normal;letter-spacing:0.000px;">15</span>
<span id="rx20" class="t" style="left:567.00px;top:369.98px;font-size:9px;color:#000;font-weight:bold;letter-spacing:0.000px;">20</span>
<span id="rx25" class="t" style="left:681.00px;top:369.98px;font-size:9px;color:#000;font-weight:normal;letter-spacing:0.000px;">25</span>
<span id="rx30" class="t" style="left:795.00px;top:369.98px;font-size:9px;color:#000;font-weight:bold;letter-spacing:0.000px;">30</span>
<span id="rx35" class="t" style="left:909.00px;top:369.98px;font-size:9px;color:#000;font-weight:normal;letter-spacing:0.000px;">35</span>
<span id="ry0" class="t" style="left:50.50px;top:417.38px;font-size:9px;color:#000;font-weight:normal;letter-spacing:0.000px;">-5</span>
<span id="ry1" class="t" style="left:51.00px;top:530.08px;font-size:9px;color:#000;font-weight:bold;letter-spacing:0.000px;">0</span>
<span id="ry2" class="t" style="left:50.50px;top:644.38px;font-size:9px;color:#000;font-weight:normal;letter-spacing:0.000px;">5</span>
<svg style="position:absolute;left:0;top:0" width="1020" height="721">
<g fill="none" stroke="#0505e6" stroke-width="1.15">
<path d="M111.5 539 Q225.5 510.5 339.5 510.5 M111.5 539 Q225.5 567.5 339.5 567.5"/>
<path d="M339.5 510.5 H909.5 V567.5 H339.5 Z"/>
<path d="M795.7 510.5 L852.3 442.5 H966 L909.5 510.5"/>
<path d="M795.7 553.5 H909.5 L966 586.5 H852.3 Z"/>
</g>
<g fill="none" stroke="#ff0000" stroke-width="1.1" stroke-dasharray="5.5 3.8"><rect x="339.5" y="510.5" width="57" height="57" rx="19"/></g>
<g fill="none" stroke="#111" stroke-width="1.1" stroke-dasharray="5.5 3.8"><rect x="407.5" y="510.5" width="57" height="57" rx="19"/></g>
<g fill="none" stroke="#9c0a6a" stroke-width="1.1">
<rect x="761.5" y="517.5" width="159" height="43"/>
<rect x="772.5" y="518.5" width="12" height="41"/>
<path d="M772.5 519 H784.5 M772.5 559 H784.5" stroke-width="1.6"/>
<rect x="790.5" y="515.5" width="5" height="47"/>
<rect x="904.5" y="515.5" width="5" height="47"/>
</g>
<circle cx="746.3" cy="538.8" r="6.8" fill="none" stroke="#ff3b3b" stroke-width="1"/>
<circle cx="746.3" cy="538.8" r="5" fill="#ff0000"/>
<g transform="translate(576,539)"><circle r="6.3" fill="#fff" stroke="#0000ff" stroke-width="1.3"/><path d="M0 0 V-6.3 A6.3 6.3 0 0 0 -6.3 0 Z M0 0 V6.3 A6.3 6.3 0 0 0 6.3 0 Z" fill="#0000ff"/></g>
<g transform="translate(920.6,410.8)"><circle r="4" fill="#fff" stroke="#0000ff" stroke-width="0.9"/><path d="M0 0 V-4 A4 4 0 0 1 4 0 Z M0 0 V4 A4 4 0 0 1 -4 0 Z" fill="#0000ff"/></g>
<circle cx="920.6" cy="423.4" r="4.5" fill="#ff8a8a"/>
<circle cx="920.6" cy="423.4" r="2.9" fill="#ff0000"/>
</svg>
<span id="k0" class="t" style="left:77.40px;top:393.39px;font-size:11px;color:#000;font-weight:normal;letter-spacing:0.995px;">Simple example rocket</span>
<span id="k1" class="t" style="left:77.40px;top:406.09px;font-size:11px;color:#000;font-weight:normal;letter-spacing:0.989px;">Length 37.5 cm, max. diameter 2.5 cm</span>
<span id="k2" class="t" style="left:77.40px;top:418.39px;font-size:11px;color:#000;font-weight:normal;letter-spacing:1.040px;">Mass with no motors 54.6 g</span>
<span id="s0" class="t" style="left:902.60px;top:393.39px;font-size:11px;color:#000;font-weight:normal;letter-spacing:0.828px;">Stability: 2.98 cal</span>
<span id="s1" class="t" style="left:930.90px;top:406.19px;font-size:11px;color:#000;font-weight:normal;letter-spacing:0.860px;">CG: 20.4 cm</span>
<span id="s2" class="t" style="left:932.80px;top:418.09px;font-size:11px;color:#000;font-weight:normal;letter-spacing:0.770px;">CP: 27.8 cm</span>
<span id="s3" class="t" style="left:934.90px;top:433.40px;font-size:8.5px;color:#8a8a8a;font-weight:normal;letter-spacing:1.263px;">at M=0.30</span>
<span id="p0" class="t" style="left:78.20px;top:647.29px;font-size:11px;color:#1e1e8c;font-weight:normal;letter-spacing:0.667px;">Apogee:</span>
<span id="p1" class="t" style="left:77.20px;top:659.99px;font-size:11px;color:#1e1e8c;font-weight:normal;letter-spacing:0.615px;">Max. velocity:</span>
<span id="p2" class="t" style="left:77.20px;top:673.19px;font-size:11px;color:#1e1e8c;font-weight:normal;letter-spacing:0.765px;">Max. acceleration:</span>
<span id="p3" class="t" style="left:184.50px;top:647.29px;font-size:11px;color:#1e1e8c;font-weight:normal;letter-spacing:0.600px;">N/A</span>
<span id="p4" class="t" style="left:184.50px;top:659.99px;font-size:11px;color:#1e1e8c;font-weight:normal;letter-spacing:0.600px;">N/A</span>
<span id="p5" class="t" style="left:184.50px;top:673.19px;font-size:11px;color:#1e1e8c;font-weight:normal;letter-spacing:0.600px;">N/A</span>
<span id="q0" class="t" style="left:73.70px;top:697.30px;font-size:9.8px;color:#111;font-weight:normal;letter-spacing:0.607px;-webkit-text-stroke:0.3px #111;">Click to select</span>
<span id="q1" class="t" style="left:155.50px;top:697.30px;font-size:9.8px;color:#111;font-weight:normal;letter-spacing:0.637px;-webkit-text-stroke:0.3px #111;">Shift+ click to select other</span>
<span id="q2" class="t" style="left:295.50px;top:697.30px;font-size:9.8px;color:#111;font-weight:normal;letter-spacing:0.679px;-webkit-text-stroke:0.3px #111;">Double-click to edit</span>
<span id="q3" class="t" style="left:403.60px;top:697.30px;font-size:9.8px;color:#111;font-weight:normal;letter-spacing:0.439px;-webkit-text-stroke:0.3px #111;">Click+ drag to move</span>
</body></html>
